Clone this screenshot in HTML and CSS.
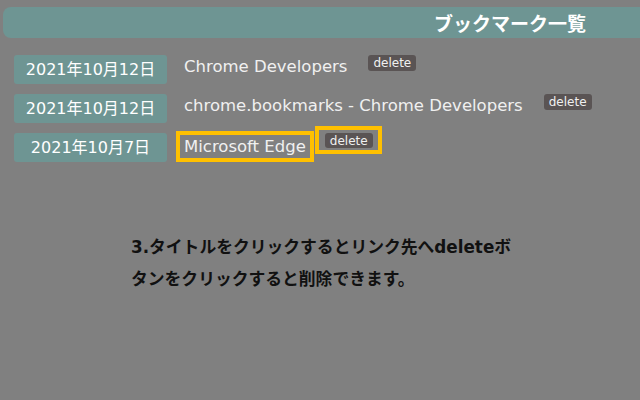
FILE: index.html
```html
<!DOCTYPE html>
<html lang="ja">
<head>
    <meta charset="UTF-8">
    <meta name="viewport" content="width=device-width, initial-scale=1.0">
    <title>ブックマーク一覧</title>
    <link rel="stylesheet" href="styles.css">
</head>
<body>

    <!-- Header -->
    <div class="header">
        <h1>ブックマーク一覧</h1>
    </div>

    <!-- Bookmark list -->
    <ul class="bookmark-list">
        <li class="bookmark">
            <span class="date">2021年10月12日</span>
            <a class="title" href="#">Chrome Developers</a>
            <button type="button" class="delete">delete</button>
        </li>
        <li class="bookmark">
            <span class="date">2021年10月12日</span>
            <a class="title" href="#">chrome.bookmarks - Chrome Developers</a>
            <button type="button" class="delete">delete</button>
        </li>
        <li class="bookmark">
            <span class="date">2021年10月7日</span>
            <a class="title marked" href="#">Microsoft Edge</a>
            <span class="mark-box"><button type="button" class="delete">delete</button></span>
        </li>
    </ul>

    <!-- Help note -->
    <p class="note">3.タイトルをクリックするとリンク先へdeleteボタンをクリックすると削除できます。</p>

</body>
</html>
```

FILE: styles.css
```css
body {
    margin: 0;
    background: #808080;
    font-family: "DejaVu Sans", "Noto Sans CJK JP", sans-serif;
    font-size: 16px;
    color: #f0f0f0;
}

.header {
    margin: 7px -10px 0 3px;
    height: 31px;
    background: #6e9593;
    border-radius: 8px;
    display: flex;
    justify-content: flex-end;
    align-items: center;
    padding-right: 64px;
}

.header h1 {
    margin: 0;
    font-size: 19px;
    font-weight: bold;
    color: #ffffff;
}

.bookmark-list {
    list-style: none;
    margin: 17px 0 0 14px;
    padding: 0;
    display: flex;
    flex-direction: column;
    gap: 10px;
}

.bookmark {
    display: flex;
    align-items: flex-start;
}

.date {
    width: 153px;
    height: 29px;
    line-height: 29px;
    text-align: center;
    background: #6e9593;
    border-radius: 3px;
    color: #ffffff;
}

.title {
    margin-left: 13px;
    padding: 1px 4px;
    font-size: 16.5px;
    line-height: 21px;
    color: #f0f0f0;
    text-decoration: none;
}

.delete {
    margin-left: 17px;
    padding: 0 5px;
    height: 16px;
    line-height: 16px;
    font-family: inherit;
    font-size: 12px;
    color: #f0f0f0;
    background: #5a5454;
    border: none;
    border-radius: 3px;
}

/* yellow annotation boxes */
.title.marked {
    margin-top: 2px;
    outline: 4px solid #ffc000;
}

.mark-box {
    margin: -7px 0 0 5px;
    padding: 3px 5px 2px 6px;
    border: 4px solid #ffc000;
    display: flex;
}

.mark-box .delete {
    margin-left: 0;
    height: 15px;
}

.note {
    width: 390px;
    margin: 69px 0 0 131px;
    font-size: 16.8px;
    font-weight: bold;
    line-height: 32px;
    color: #111111;
}
```
